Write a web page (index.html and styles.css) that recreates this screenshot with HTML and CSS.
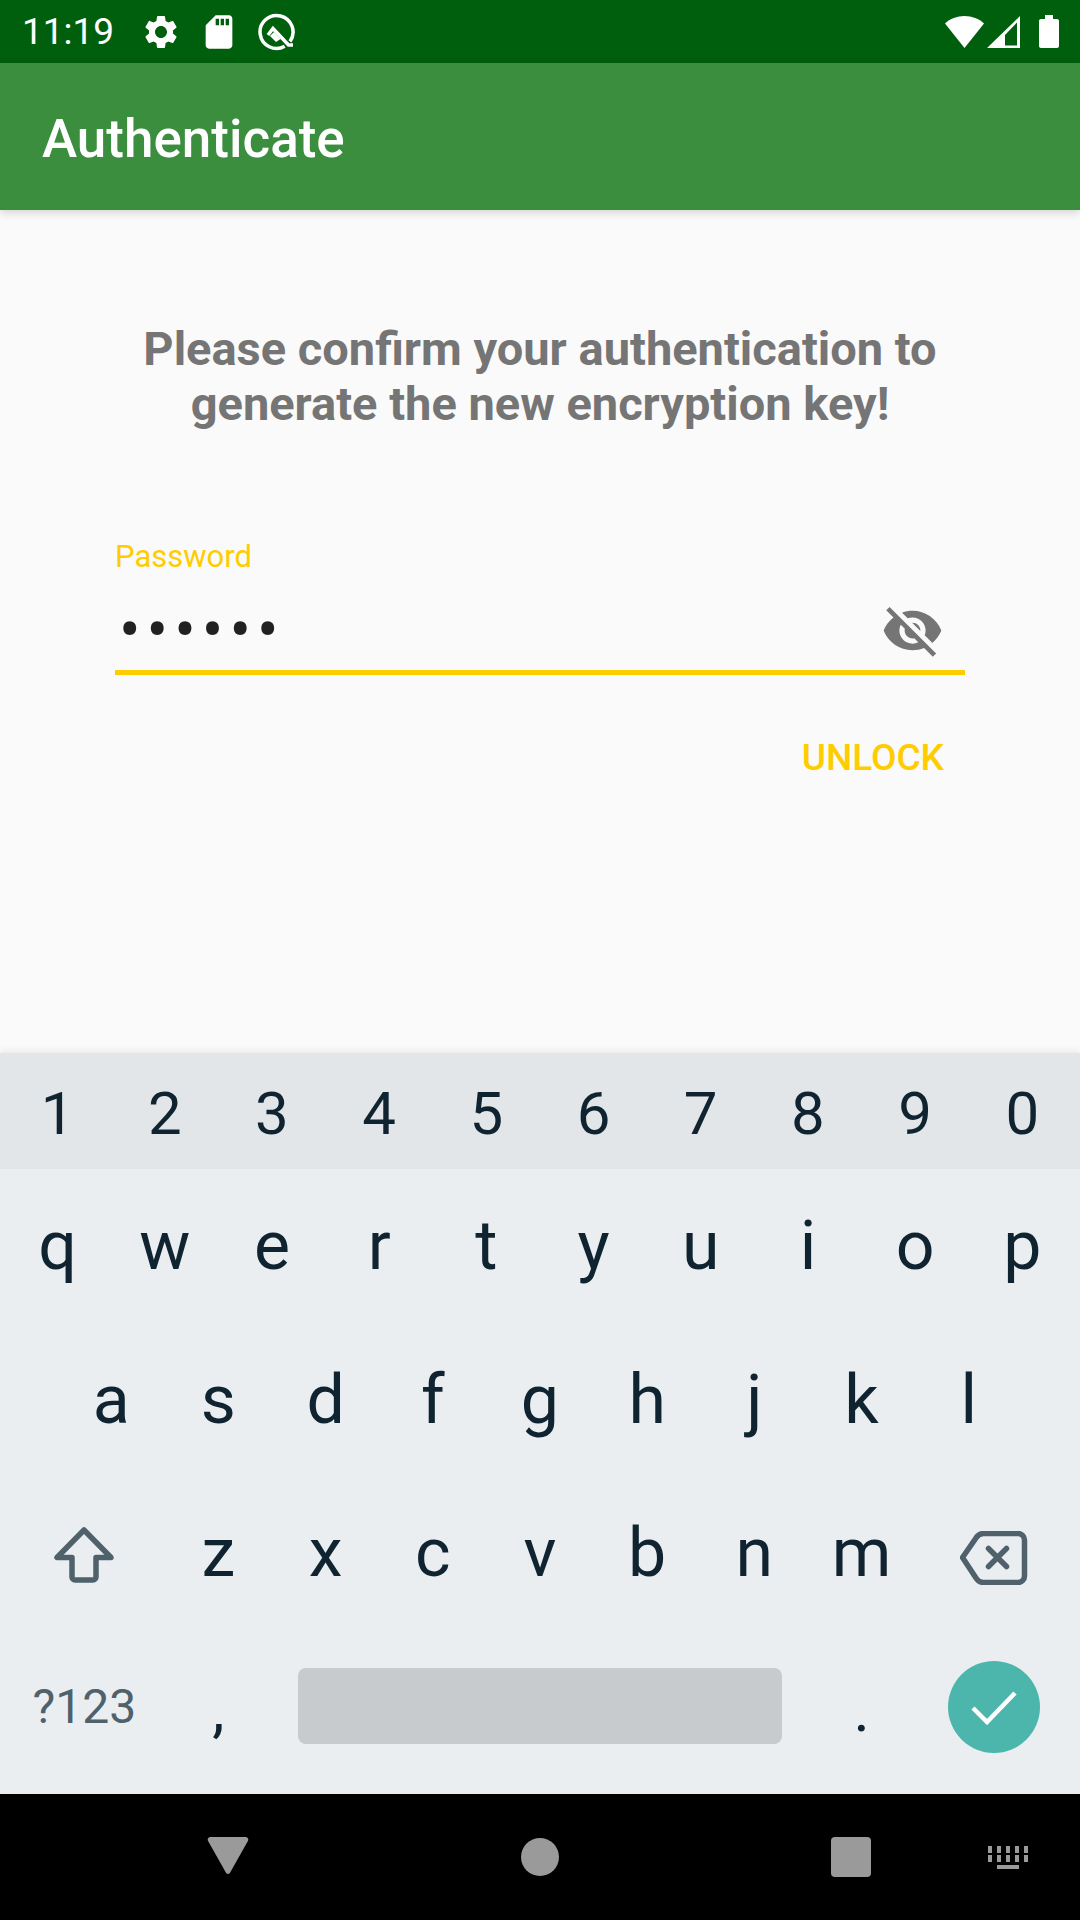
FILE: index.html
```html
<!DOCTYPE html>
<html lang="en">
<head>
<meta charset="UTF-8">
<meta name="viewport" content="width=device-width, initial-scale=1.0">
<title>Authenticate</title>
<link rel="stylesheet" href="styles.css">
</head>
<body>
<div id="screen">
    <div class="status-bar">
        <span class="clock">11:19</span>
        <svg class="icon-gear" viewBox="0 0 24 24"><path d="M19.14 12.94c.04-.3.06-.61.06-.94 0-.32-.02-.64-.07-.94l2.03-1.58a.49.49 0 0 0 .12-.61l-1.92-3.32a.488.488 0 0 0-.59-.22l-2.39.96c-.5-.38-1.03-.7-1.62-.94l-.36-2.54a.484.484 0 0 0-.48-.41h-3.84c-.24 0-.43.17-.47.41l-.36 2.54c-.59.24-1.13.57-1.62.94l-2.39-.96c-.22-.08-.47 0-.59.22L2.74 8.87c-.12.21-.08.47.12.61l2.03 1.58c-.05.3-.09.63-.09.94s.02.64.07.94l-2.03 1.58a.49.49 0 0 0-.12.61l1.92 3.32c.12.22.37.29.59.22l2.39-.96c.5.38 1.03.7 1.62.94l.36 2.54c.05.24.24.41.48.41h3.84c.24 0 .44-.17.47-.41l.36-2.54c.59-.24 1.13-.56 1.62-.94l2.39.96c.22.08.47 0 .59-.22l1.92-3.32c.12-.22.07-.47-.12-.61l-2.01-1.58zM12 15.6c-1.98 0-3.6-1.62-3.6-3.6s1.62-3.6 3.6-3.6 3.6 1.62 3.6 3.6-1.62 3.6-3.6 3.6z"/></svg>
        <svg class="icon-sd" viewBox="0 0 24 24"><path d="M18 2h-8L4.02 8 4 20c0 1.1.9 2 2 2h12c1.1 0 2-.9 2-2V4c0-1.1-.9-2-2-2zm-6 6h-2V4h2v4zm3 0h-2V4h2v4zm3 0h-2V4h2v4z"/></svg>
        <svg class="icon-q" viewBox="256 11 40 40">
            <path class="q-line" d="M290 40.500A16.500 16.500 0 1 0 284.700 45.300"/>
            <path class="q-line" d="M268 34L273 27.500L288.500 44H293"/>
            <path d="M270 35l4-4 6.500 7-4.500 3z"/>
        </svg>
        <span class="spacer"></span>
        <svg class="icon-wifi" viewBox="0 0 39 32"><path d="M0 7.500C5 2.800 12 0 19.500 0S34 2.800 39 7.500L19.500 32z"/></svg>
        <svg class="icon-signal" viewBox="0 0 33 32"><path fill-rule="evenodd" d="M33 0v32H0zM18 19v10.500h12V6.500z"/></svg>
        <svg class="icon-battery" viewBox="0 0 20 33"><path d="M6 0h8v4h4c1.100 0 2 .9 2 2v25c0 1.100-.9 2-2 2H2c-1.100 0-2-.9-2-2V6c0-1.100.9-2 2-2h4z"/></svg>
    </div>
    <div class="app-bar">Authenticate</div>

    <div class="content">
        <p class="message">Please confirm your authentication to<br>generate the new encryption key!</p>
        <div class="field">
            <label class="field-label">Password</label>
            <div class="field-row">
                <span class="dots">••••••</span>
                <svg class="icon-eye" viewBox="0 0 24 24"><path d="M12 7c2.760 0 5 2.240 5 5 0 .65-.13 1.260-.36 1.830l2.920 2.920c1.510-1.260 2.700-2.890 3.430-4.750-1.730-4.390-6-7.500-11-7.500-1.400 0-2.740.25-3.980.7l2.160 2.160C10.740 7.130 11.350 7 12 7zM2 4.270l2.280 2.280.46.46C3.080 8.300 1.780 10.020 1 12c1.730 4.390 6 7.500 11 7.500 1.550 0 3.030-.3 4.380-.84l.42.42L19.730 22 21 20.730 3.270 3 2 4.270zM7.530 9.800l1.550 1.550c-.05.21-.08.43-.08.65 0 1.660 1.340 3 3 3 .22 0 .44-.03.65-.08l1.550 1.550c-.67.33-1.410.53-2.200.53-2.760 0-5-2.240-5-5 0-.79.2-1.530.53-2.200zm4.310-.78l3.150 3.150.02-.16c0-1.660-1.340-3-3-3l-.17.01z"/></svg>
            </div>
        </div>
        <div class="actions"><button class="unlock">UNLOCK</button></div>
    </div>

    <div class="keyboard">
        <div class="row row-numbers">
            <span class="key">1</span><span class="key">2</span><span class="key">3</span><span class="key">4</span><span class="key">5</span><span class="key">6</span><span class="key">7</span><span class="key">8</span><span class="key">9</span><span class="key">0</span>
        </div>
        <div class="row">
            <span class="key">q</span><span class="key">w</span><span class="key">e</span><span class="key">r</span><span class="key">t</span><span class="key">y</span><span class="key">u</span><span class="key">i</span><span class="key">o</span><span class="key">p</span>
        </div>
        <div class="row row-home">
            <span class="key">a</span><span class="key">s</span><span class="key">d</span><span class="key">f</span><span class="key">g</span><span class="key">h</span><span class="key">j</span><span class="key">k</span><span class="key">l</span>
        </div>
        <div class="row">
            <span class="key key-wide">
                <svg class="icon-shift" viewBox="0 0 60 56"><path d="M30 3L3 30.500h15V50a3 3 0 0 0 3 3h18a3 3 0 0 0 3-3V30.500h15z"/></svg>
            </span>
            <span class="key">z</span><span class="key">x</span><span class="key">c</span><span class="key">v</span><span class="key">b</span><span class="key">n</span><span class="key">m</span>
            <span class="key key-wide">
                <svg class="icon-back" viewBox="0 0 68 54"><path d="M2.500 26.500L16 7a9 9 0 0 1 7-4.500h35a6.500 6.500 0 0 1 6.500 6.500v36a6.500 6.500 0 0 1-6.500 6.500H23a9 9 0 0 1-7-4.500z"/><path d="M28.500 17.500l18 18M46.500 17.500l-18 18"/></svg>
            </span>
        </div>
        <div class="row">
            <span class="key key-wide key-symbols">?123</span>
            <span class="key key-punct">,</span>
            <span class="key-space"><span class="space-bar"></span></span>
            <span class="key key-punct">.</span>
            <span class="key key-wide">
                <span class="enter">
                    <svg class="icon-check" viewBox="0 0 46 36"><path d="M2 19l14 14L44 4"/></svg>
                </span>
            </span>
        </div>
    </div>

    <div class="nav-bar">
        <svg class="nav-back" viewBox="0 0 42 38"><path d="M3 0h36c2 0 3.400 1.800 2.600 3.800L23.500 36c-1 2.600-4 2.600-5 0L.4 3.800C-.4 1.800 1 0 3 0z"/></svg>
        <span class="nav-home"></span>
        <span class="nav-recent"></span>
        <svg class="nav-keys" viewBox="0 0 40 23">
            <path d="M0 0h4v7H0zM9 0h4v7H9zM18 0h4v7h-4zM27 0h4v7h-4zM36 0h4v7h-4zM0 9h4v7H0zM9 9h4v7H9zM18 9h4v7h-4zM27 9h4v7h-4zM36 9h4v7h-4zM9 19h22v4H9z"/>
        </svg>
    </div>
</div>
</body>
</html>
```

FILE: styles.css
```css
body {
    margin: 0;
    font-family: Roboto, "Liberation Sans", sans-serif;
    background-color: #fafafa;
}
#screen {
    width: 1080px;
    height: 1920px;
    display: flex;
    flex-direction: column;
    overflow: hidden;
}

/* status bar */
.status-bar {
    height: 63px;
    flex: none;
    background-color: #005f0c;
    color: #fff;
    fill: #fff;
    display: flex;
    align-items: center;
    padding: 0 21px 0 22px;
    box-sizing: border-box;
}
.clock {
    font-size: 37px;
    width: 119px;
}
.status-bar svg {
    display: block;
    flex: none;
}
.icon-gear, .icon-sd {
    width: 40px;
    height: 40px;
}
.icon-sd {
    margin-left: 18px;
}
.icon-q {
    width: 40px;
    height: 40px;
    margin-left: 17px;
}
.q-line {
    fill: none;
    stroke: #fff;
    stroke-width: 3.500;
}
.spacer {
    flex: 1;
}
.icon-wifi {
    width: 39px;
    height: 32px;
}
.icon-signal {
    width: 33px;
    height: 32px;
    margin-left: 3px;
}
.icon-battery {
    width: 20px;
    height: 33px;
    margin-left: 19px;
}

/* app bar */
.app-bar {
    height: 147px;
    flex: none;
    box-sizing: border-box;
    background-color: #3a8e3d;
    color: #fff;
    font-size: 53px;
    font-weight: 500;
    line-height: 142px;
    padding: 5px 0 0 42px;
    box-shadow: 0 3px 8px rgba(0, 0, 0, 0.15);
    position: relative;
}

/* form */
.content {
    flex: 1;
    padding: 111px 115px 0;
    background-color: #fafafa;
}
.message {
    margin: 0 0 107px;
    font-size: 47px;
    font-weight: 700;
    line-height: 55px;
    color: #757575;
    text-align: center;
}
.field {
    border-bottom: 5px solid #ffcc00;
}
.field-label {
    display: block;
    font-size: 31px;
    line-height: 38px;
    color: #ffcc00;
}
.field-row {
    display: flex;
    align-items: center;
    justify-content: space-between;
    height: 94px;
    box-sizing: border-box;
    padding: 15px 21px 0 4px;
}
.dots {
    font-size: 64px;
    letter-spacing: 6px;
    color: #212121;
}
.icon-eye {
    width: 63px;
    height: 63px;
    fill: #757575;
}
.actions {
    display: flex;
    justify-content: flex-end;
    padding: 62px 21px 0 0;
}
.unlock {
    background: none;
    border: none;
    padding: 0;
    font-family: inherit;
    font-size: 37px;
    font-weight: 500;
    line-height: 42px;
    color: #ffcc00;
}

/* keyboard */
.keyboard {
    flex: none;
    height: 741px;
    background-color: #ebeef1;
    box-shadow: 0 -3px 6px rgba(0, 0, 0, 0.06);
    color: #0f2430;
    position: relative;
    box-sizing: border-box;
    padding-bottom: 10px;
}
.row {
    display: flex;
    height: 153.700px;
    padding: 0 4px;
    box-sizing: border-box;
}
.row-numbers {
    height: 116px;
    padding-top: 5px;
    background-color: #e3e6e9;
}
.row-home {
    padding: 0 57.600px;
}
.key {
    flex: 0 0 107.200px;
    display: flex;
    align-items: center;
    justify-content: center;
    font-size: 68px;
}
.row-numbers .key {
    font-size: 60px;
}
.key-wide {
    flex: 0 0 160.800px;
}
.key-symbols {
    font-size: 48px;
    color: #4f616b;
}
.key-punct {
    font-size: 62px;
    padding-top: 6px;
    box-sizing: border-box;
}
.key-space {
    flex: 1;
    display: flex;
    align-items: center;
    padding: 0 26px 2px;
}
.space-bar {
    flex: 1;
    height: 76px;
    background-color: #c7cbce;
    border-radius: 8px;
}
.icon-shift {
    width: 60px;
    height: 56px;
    margin-top: 4px;
    fill: none;
    stroke: #4f616b;
    stroke-width: 5.500;
    stroke-linejoin: round;
}
.icon-back {
    width: 68px;
    height: 54px;
    margin: 10px 3px 0 0;
    fill: none;
    stroke: #4f616b;
    stroke-width: 5.500;
    stroke-linejoin: round;
    stroke-linecap: round;
}
.enter {
    width: 92px;
    height: 92px;
    margin-right: 4px;
    border-radius: 50%;
    background-color: #4db6ac;
    display: flex;
    align-items: center;
    justify-content: center;
}
.icon-check {
    width: 46px;
    height: 36px;
    fill: none;
    stroke: #fff;
    stroke-width: 4.500;
}

/* navigation */
.nav-bar {
    flex: none;
    height: 126px;
    background-color: #000;
    position: relative;
    display: flex;
    align-items: center;
    fill: #9a9a9a;
}
.nav-back {
    width: 42px;
    height: 37px;
    margin: -4px 0 0 207px;
}
.nav-home {
    width: 38px;
    height: 38px;
    margin-left: 272px;
    border-radius: 50%;
    background-color: #9a9a9a;
}
.nav-recent {
    width: 40px;
    height: 40px;
    margin-left: 272px;
    border-radius: 4px;
    background-color: #9a9a9a;
}
.nav-keys {
    width: 40px;
    height: 23px;
    margin-left: 117px;
}
```
